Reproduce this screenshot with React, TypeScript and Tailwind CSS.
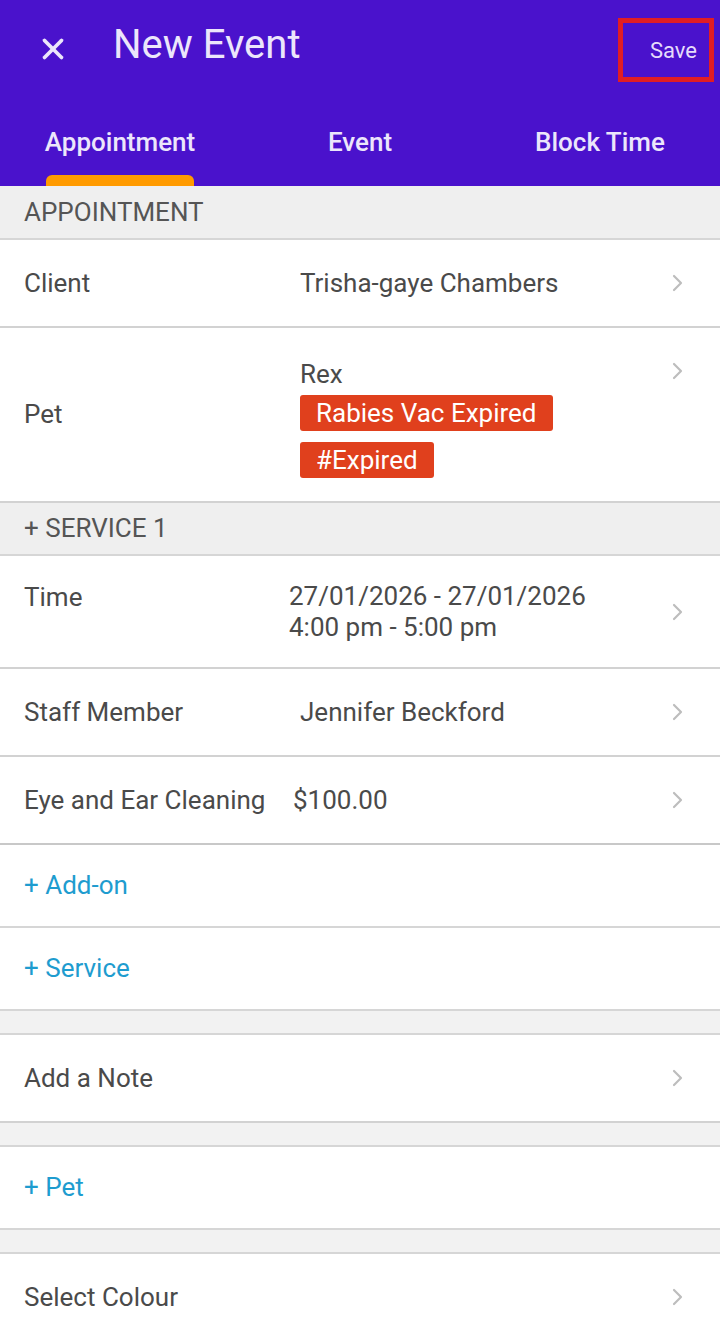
import { X } from "lucide-react";

const Chevron = () => (
  <svg width="14" height="22" viewBox="0 0 14 22" className="shrink-0">
    <path d="M4 4 L11 11 L4 18" fill="none" stroke="#bdbdbd" strokeWidth="2.2" strokeLinecap="round" strokeLinejoin="round" />
  </svg>
);

const SectionHeader = ({ title, h }: { title: string; h: string }) => (
  <div className={`${h} bg-[#efefef] border-b-2 border-[#d6d6d6] flex items-center px-6 text-[#555]`}>
    {title}
  </div>
);

const Gap = () => <div className="h-[24px] bg-[#f2f2f2] border-b-2 border-[#d6d6d6]" />;

const NavRow = ({ label }: { label: string }) => (
  <div className="h-[88px] bg-white border-b-2 border-[#d2d2d2] flex items-center px-6">
    <div className="flex-1">{label}</div>
    <div className="mr-[12px]">
      <Chevron />
    </div>
  </div>
);

const LinkRow = ({ label }: { label: string }) => (
  <div className="h-[83px] bg-white border-b-2 border-[#d6d6d6] flex items-center px-6 text-[#1e9ccf]">
    {label}
  </div>
);

export default function App() {
  return (
    <div className="w-[720px] h-[1332px] overflow-hidden bg-white text-[26px] text-[#4a4a4a] font-['Roboto',sans-serif]">
      <div className="h-[186px] bg-[#4a12cc] flex flex-col">
        <div className="h-[100px] flex items-start">
          <div className="pl-[36px] pt-[32px] w-[113px]">
            <X size={34} strokeWidth={2.6} color="#ece6fb" />
          </div>
          <div className="pt-[20px] text-[40px] leading-[50px] text-[#ece6fb] flex-1">New Event</div>
          <div className="mt-[18px] mr-[6px] w-[96px] h-[64px] border-[5px] border-[#e11d24] flex items-center justify-end pr-[12px] text-[22px] text-[#e6dcfb]">
            Save
          </div>
        </div>
        <div className="flex-1 grid grid-cols-3">
          <div className="flex flex-col items-center">
            <div className="pt-[25px] h-[75px] text-[26px] font-medium text-[#ece6fb] leading-[34px]">Appointment</div>
            <div className="w-[148px] h-[11px] bg-[#ff9a00] rounded-t-[6px]" />
          </div>
          <div className="flex flex-col items-center">
            <div className="pt-[25px] text-[26px] font-medium text-[#ece6fb] leading-[34px]">Event</div>
          </div>
          <div className="flex flex-col items-center">
            <div className="pt-[25px] text-[26px] font-medium text-[#ece6fb] leading-[34px]">Block Time</div>
          </div>
        </div>
      </div>

      <SectionHeader title="APPOINTMENT" h="h-[54px]" />

      <div className="h-[88px] bg-white border-b-2 border-[#d2d2d2] flex items-center px-6">
        <div className="w-[276px] shrink-0">Client</div>
        <div className="flex-1">Trisha-gaye Chambers</div>
        <div className="mr-[12px]">
          <Chevron />
        </div>
      </div>

      <div className="h-[175px] bg-white border-b-2 border-[#d2d2d2] flex items-center px-6">
        <div className="w-[276px] shrink-0">Pet</div>
        <div className="flex-1 flex flex-col items-start pt-[8px]">
          <div className="leading-[30px]">Rex</div>
          <div className="mt-[6px] h-[36px] px-[16px] bg-[#e0401d] text-white rounded-[3px] flex items-center">
            Rabies Vac Expired
          </div>
          <div className="mt-[11px] h-[36px] px-[16px] bg-[#e0401d] text-white rounded-[3px] flex items-center">
            #Expired
          </div>
        </div>
        <div className="mr-[12px] self-start mt-[32px]">
          <Chevron />
        </div>
      </div>

      <SectionHeader title="+ SERVICE 1" h="h-[53px]" />

      <div className="h-[113px] bg-white border-b-2 border-[#d2d2d2] flex items-center px-6">
        <div className="w-[265px] shrink-0 self-start pt-[22px]">Time</div>
        <div className="flex-1 leading-[31px]">
          <div>27/01/2026 - 27/01/2026</div>
          <div>4:00 pm - 5:00 pm</div>
        </div>
        <div className="mr-[12px]">
          <Chevron />
        </div>
      </div>

      <div className="h-[88px] bg-white border-b-2 border-[#d2d2d2] flex items-center px-6">
        <div className="w-[276px] shrink-0">Staff Member</div>
        <div className="flex-1">Jennifer Beckford</div>
        <div className="mr-[12px]">
          <Chevron />
        </div>
      </div>

      <div className="h-[88px] bg-white border-b-2 border-[#c8c8c8] flex items-center px-6">
        <div className="w-[269px] shrink-0 whitespace-nowrap">Eye and Ear Cleaning</div>
        <div className="flex-1">$100.00</div>
        <div className="mr-[12px]">
          <Chevron />
        </div>
      </div>

      <LinkRow label="+ Add-on" />
      <LinkRow label="+ Service" />
      <Gap />
      <NavRow label="Add a Note" />
      <Gap />
      <LinkRow label="+ Pet" />
      <Gap />
      <NavRow label="Select Colour" />
    </div>
  );
}
